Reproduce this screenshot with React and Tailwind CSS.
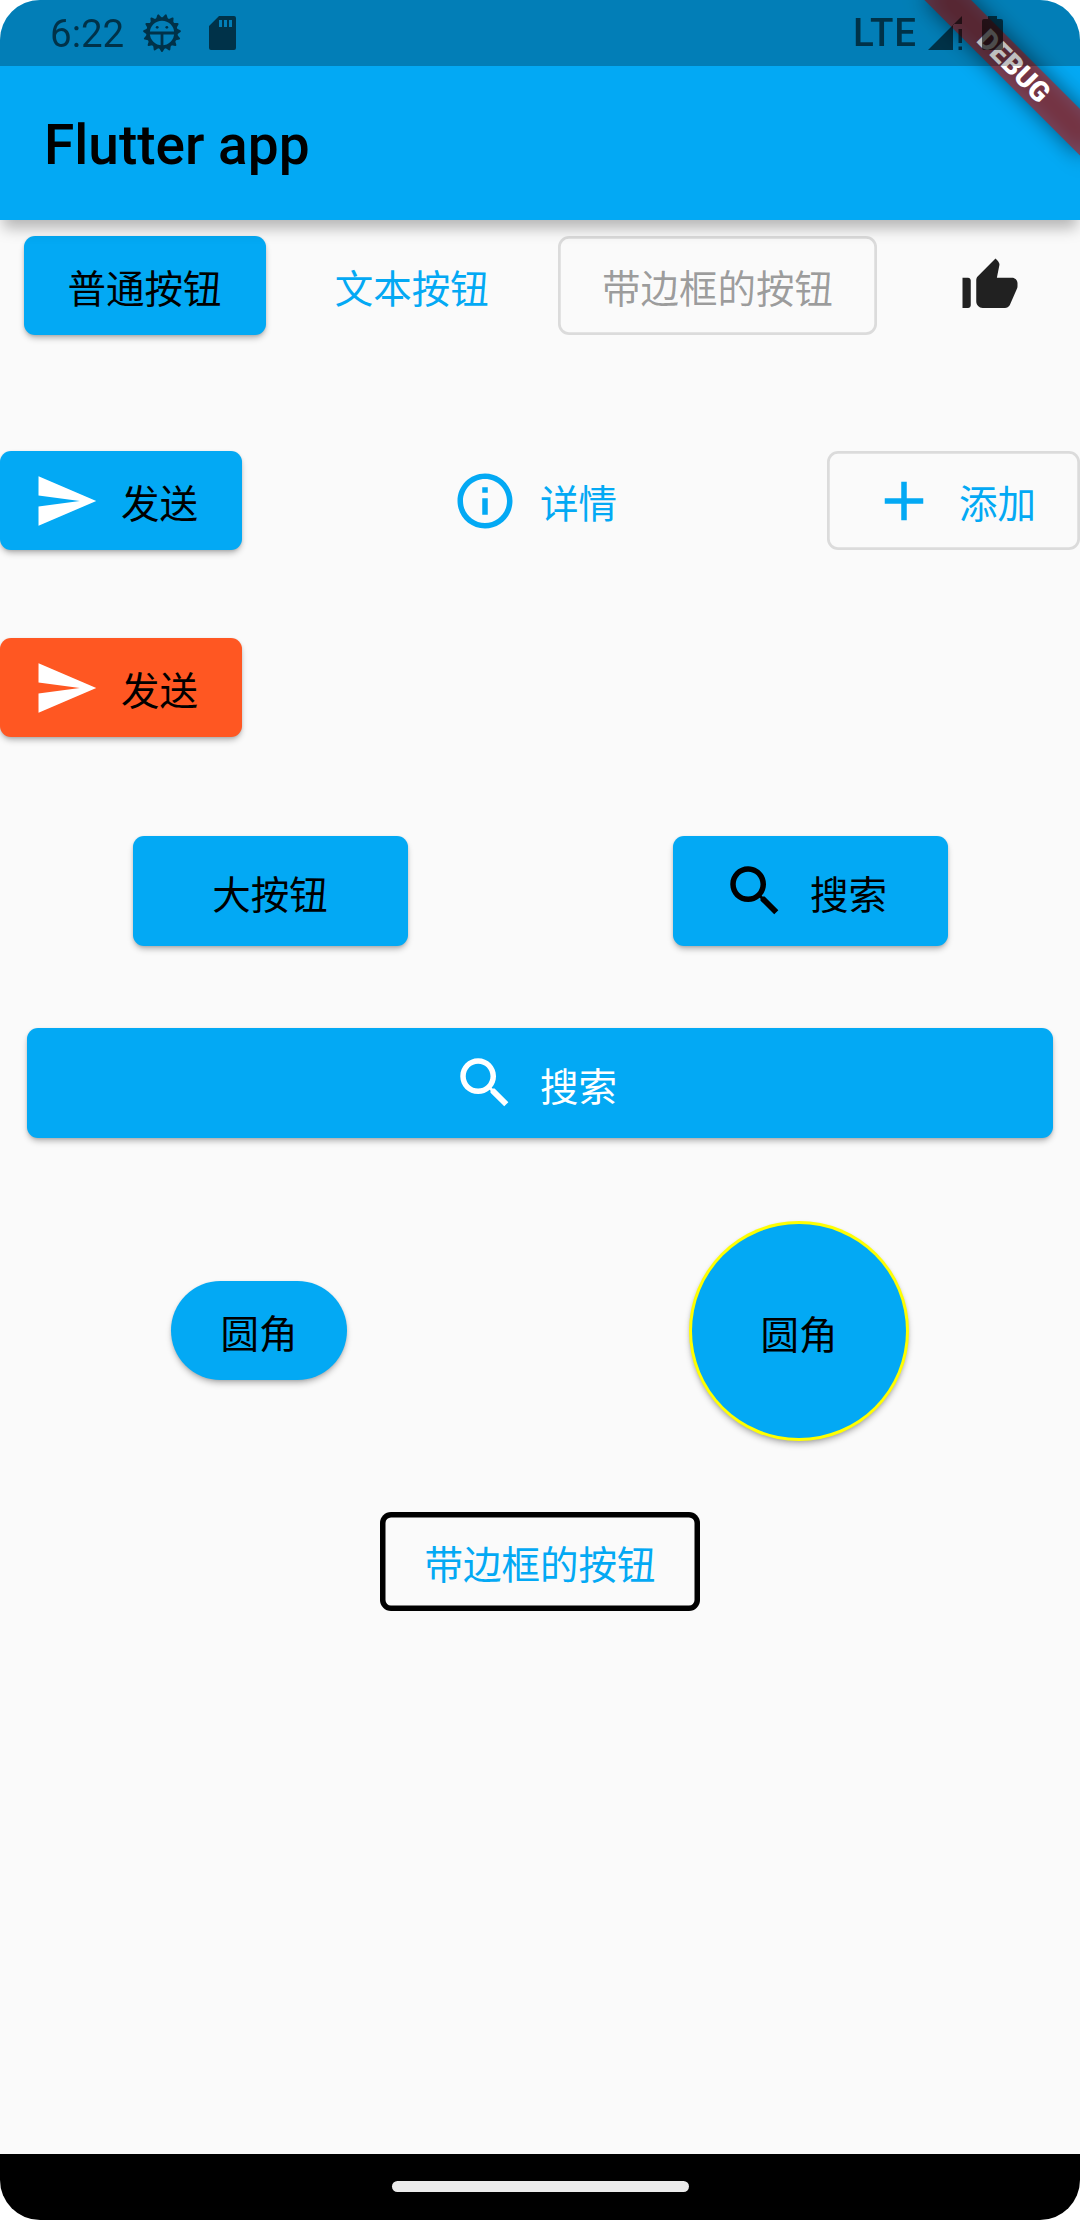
const PATHS = {
  send: "M2.01 21L23 12 2.01 3 2 10l15 2-15 2z",
  info: "M11 7h2v2h-2zm0 4h2v6h-2zm1-9C6.48 2 2 6.48 2 12s4.48 10 10 10 10-4.48 10-10S17.52 2 12 2zm0 18c-4.41 0-8-3.59-8-8s3.59-8 8-8 8 3.59 8 8-3.59 8-8 8z",
  add: "M19 13h-6v6h-2v-6H5v-2h6V5h2v6h6v2z",
  search:
    "M15.5 14h-.79l-.28-.27C15.41 12.59 16 11.11 16 9.5 16 5.91 13.09 3 9.5 3S3 5.91 3 9.5 5.91 16 9.5 16c1.61 0 3.09-.59 4.23-1.57l.27.28v.79l5 4.99L20.49 19l-4.99-5zm-6 0C7.01 14 5 11.99 5 9.5S7.01 5 9.5 5 14 7.01 14 9.5 11.99 14 9.5 14z",
  thumb:
    "M2 20h2c.55 0 1-.45 1-1v-9c0-.55-.45-1-1-1H2v11zm19.83-7.12c.11-.25.17-.52.17-.8V11c0-1.1-.9-2-2-2h-5.5l.92-4.65c.05-.22.02-.46-.08-.66-.23-.45-.52-.86-.88-1.22L14 2 7.59 8.41C7.21 8.79 7 9.3 7 9.83v7.84C7 18.95 8.05 20 9.34 20h8.11c.7 0 1.36-.37 1.72-.97l2.66-6.15z",
};

function Icon({ name, className = "" }) {
  return (
    <svg viewBox="0 0 24 24" fill="currentColor" className={`size-[66px] shrink-0 ${className}`}>
      <path d={PATHS[name]} />
    </svg>
  );
}

const KIND = {
  elevated:
    "px-[44px] rounded-[11px] bg-[#03a9f4] text-black shadow-[0_4px_6px_-1px_rgba(0,0,0,0.28),0_1px_3px_0_rgba(0,0,0,0.1)]",
  text: "px-[22px] rounded-[11px] text-[#03a9f4]",
  outlined: "px-[44px] rounded-[11px] shadow-[inset_0_0_0_2.75px_rgba(0,0,0,0.12)] text-[#03a9f4]",
};

function Button({ kind = "elevated", icon, iconClass, className = "h-[99px]", children }) {
  return (
    <button
      className={`flex shrink-0 items-center justify-center gap-[22px] whitespace-nowrap text-[38.5px] leading-none ${KIND[kind]} ${className}`}
    >
      {icon && <Icon name={icon} className={iconClass} />}
      <span className="pt-[9.5px]">{children}</span>
    </button>
  );
}

const TEETH = Array.from({ length: 15 }, (_, i) => i * 24);

function GearIcon() {
  return (
    <svg viewBox="0 0 40 40" className="h-[40px] w-[40px]" fill="none" stroke="currentColor">
      <circle cx="20" cy="20" r="14" strokeWidth="3.6" />
      {TEETH.map((angle) => (
        <path
          key={angle}
          d="M18.200 35L20 38L21.800 35z"
          fill="currentColor"
          strokeWidth="2"
          strokeLinejoin="round"
          transform={`rotate(${angle} 20 20)`}
        />
      ))}
      <path d="M6 20h28M20 20v14" strokeWidth="2.8" />
      <circle cx="15.200" cy="14.300" r="1.4" fill="currentColor" stroke="none" />
      <circle cx="24.800" cy="14.300" r="1.4" fill="currentColor" stroke="none" />
    </svg>
  );
}

function StatusBar() {
  return (
    <div className="absolute inset-x-0 top-0 z-20 h-[66px] bg-black/25">
      <div className="flex h-full items-center text-[38.5px] leading-none text-black opacity-60">
        <span className="ml-[50px] mt-[3px] w-[92px]">6:22</span>
        <GearIcon />
        <svg viewBox="0 0 27 34" className="ml-[27px] h-[34px] w-[27px]" fill="currentColor">
          <path
            fillRule="evenodd"
            d="M10 0H25a2 2 0 0 1 2 2V32a2 2 0 0 1-2 2H2a2 2 0 0 1-2-2V10zM10 4v7h3V4zM15 4v7h3V4zM20 4v7h3V4z"
          />
        </svg>
        <span className="ml-auto font-medium tracking-[0.9px]">LTE</span>
        <svg viewBox="0 0 35 34" className="ml-[11px] h-[34px] w-[35px]" fill="currentColor">
          <path d="M34 0V8H25V34H0zM30.500 13H34V27H30.500zM30.500 30.500H34V34H30.500z" />
        </svg>
        <svg viewBox="0 0 21 34" className="ml-[19px] mr-[77px] h-[34px] w-[21px]" fill="currentColor">
          <path d="M6 0h9v3h4a2 2 0 0 1 2 2v27a2 2 0 0 1-2 2H2a2 2 0 0 1-2-2V5a2 2 0 0 1 2-2h4z" />
        </svg>
      </div>
    </div>
  );
}

function DebugBanner() {
  return (
    <div className="absolute right-0 top-0 z-10 h-[220px] w-[220px] overflow-hidden">
      <div className="absolute left-[220px] top-0 origin-top-left rotate-45">
        <div className="absolute left-[-110px] top-[77px] h-[33px] w-[220px] bg-black/50 blur-[10.9px]" />
        <div className="absolute left-[-110px] top-[77px] flex h-[33px] w-[220px] items-center justify-center bg-[#b71c1c]/63 text-[28px] leading-none font-black text-white">
          DEBUG
        </div>
      </div>
    </div>
  );
}

export default function App() {
  return (
    <div className="h-[2220px] w-[1080px] bg-white">
      <div className="relative flex h-full flex-col overflow-hidden rounded-[40px] bg-[#fafafa] font-[Roboto,'Noto_Sans_CJK_SC',sans-serif]">
        <StatusBar />
        <DebugBanner />
        <header className="z-[1] flex h-[220px] shrink-0 items-center bg-[#03a9f4] pl-[44px] pt-[70px] shadow-[0_11px_14px_-3px_rgba(0,0,0,0.28)]">
          <h1 className="text-[55px] leading-none font-medium text-black">Flutter app</h1>
        </header>

        <main className="flex flex-1 flex-col">
          <div className="flex h-[132px] items-center justify-around pb-px">
            <Button>普通按钮</Button>
            <Button kind="text">文本按钮</Button>
            <Button kind="outlined" className="h-[99px] text-black/38">
              带边框的按钮
            </Button>
            <button className="grid size-[132px] place-items-center text-black/87">
              <Icon name="thumb" />
            </button>
          </div>

          <div className="mt-[82.5px] flex h-[132px] items-center justify-between">
            <Button icon="send" iconClass="text-white" className="h-[99px] pl-[33px]">
              发送
            </Button>
            <Button kind="text" icon="info">
              详情
            </Button>
            <Button kind="outlined" icon="add">
              添加
            </Button>
          </div>

          <div className="mt-[55px] flex h-[132px] items-center">
            <Button icon="send" iconClass="text-white" className="h-[99px] bg-[#ff5722] pl-[33px]">
              发送
            </Button>
          </div>

          <div className="mt-[82.5px] flex justify-around">
            <Button className="h-[110px] w-[275px]">大按钮</Button>
            <Button icon="search" className="h-[110px] w-[275px] pl-[33px]">
              搜索
            </Button>
          </div>

          <div className="mt-[82px] flex px-[27px]">
            <Button icon="search" className="h-[110px] flex-1 pl-[33px] text-white">
              搜索
            </Button>
          </div>

          <div className="mt-[83px] flex items-center justify-around">
            <Button className="mb-px h-[99px] w-[176px] rounded-full">圆角</Button>
            <div className="rounded-full bg-[#ffff00] p-[2.75px] shadow-[0_4px_6px_-1px_rgba(0,0,0,0.28),0_1px_3px_0_rgba(0,0,0,0.1)]">
              <Button className="size-[214.5px] rounded-full shadow-none">圆角</Button>
            </div>
          </div>

          <div className="mt-[55px] flex h-[132px] items-center justify-center pb-px">
            <Button kind="outlined" className="h-[99px] shadow-[inset_0_0_0_5.5px_#000]">
              带边框的按钮
            </Button>
          </div>
        </main>

        <footer className="flex h-[66px] shrink-0 items-center justify-center bg-black pb-px">
          <div className="h-[11px] w-[297px] rounded-full bg-[#ebebeb]" />
        </footer>
      </div>
    </div>
  );
}
